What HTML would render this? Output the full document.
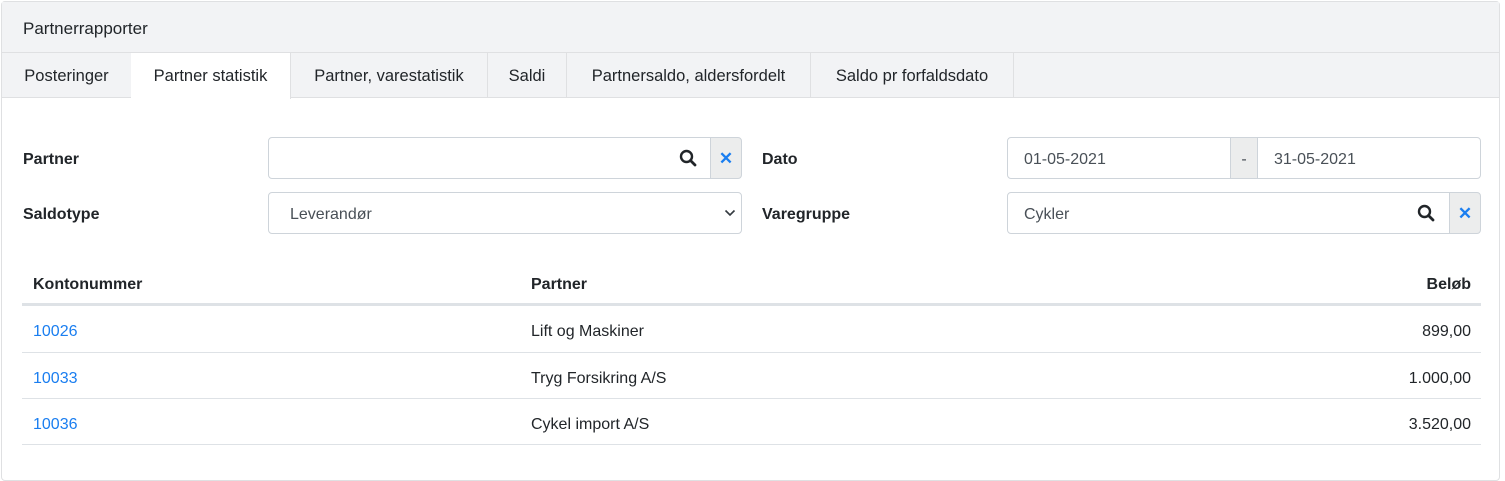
<!DOCTYPE html>
<html><head><meta charset="utf-8"><style>
*{box-sizing:border-box;margin:0;padding:0}
body{width:1505px;height:446px;overflow:hidden;background:#fff;font-family:"Liberation Sans",sans-serif;font-size:16px;color:#212529}
.card{position:absolute;left:1px;top:1px;width:1499px;height:480px;border:1px solid #dfe0e2;border-radius:4px}
.hdr{height:51px;background:#f2f3f5;border-bottom:1px solid #dfe0e2;padding:17px 0 0 21px;font-size:17px}
.tabs{position:absolute;top:51px;left:0;right:0;height:45px;background:#f2f3f5;border-bottom:1px solid #dfe0e2}
.tab{position:absolute;top:0;height:45px;padding-top:14px;text-align:center;border-right:1px solid #dfe0e2;font-size:16.5px}
.tab.act{background:#fff;height:46px}
.abs{position:absolute}
.lbl{font-weight:bold}
.inp{position:absolute;border:1px solid #ced4da;background:#fff;height:42px;padding:13px 0 0 21px;color:#495057}
.add{position:absolute;background:#eceded;border:1px solid #ced4da;height:42px;text-align:center;padding-top:11px}
.x{color:#1a7ef0;font-weight:bold;font-size:17px}
.th{font-weight:bold}
.line{position:absolute;left:22px;width:1459px;height:1px;background:#dee2e6}
a{color:#1a7ef0;text-decoration:none}
</style></head><body>
<div class="card">
<div class="hdr">Partnerrapporter</div>
<div class="tabs">
<div class="tab" style="left:0;width:130px">Posteringer</div>
<div class="tab act" style="left:129px;width:160px">Partner statistik</div>
<div class="tab" style="left:289px;width:197px">Partner, varestatistik</div>
<div class="tab" style="left:486px;width:79px">Saldi</div>
<div class="tab" style="left:565px;width:244px">Partnersaldo, aldersfordelt</div>
<div class="tab" style="left:809px;width:203px">Saldo pr forfaldsdato</div>
</div>
</div>
<div class="abs lbl" style="left:23px;top:151px">Partner</div>
<div class="inp" style="left:268px;top:137px;width:443px;border-radius:4px 0 0 4px"></div>
<svg class="abs" style="left:679px;top:149px" width="18" height="18" viewBox="0 0 18 18"><circle cx="7.5" cy="7.5" r="5.5" fill="none" stroke="#212529" stroke-width="2.4"/><path d="M11.5 11.5L16 16" stroke="#212529" stroke-width="2.8" stroke-linecap="round"/></svg>
<div class="add x" style="left:710px;top:137px;width:32px;border-radius:0 4px 4px 0">✕</div>
<div class="abs lbl" style="left:23px;top:206px">Saldotype</div>
<div class="inp" style="left:268px;top:192px;width:474px;border-radius:4px">Leverandør</div>
<svg class="abs" style="left:724px;top:209px" width="12" height="8" viewBox="0 0 12 8"><path d="M1.5 1.5L6 6L10.5 1.5" fill="none" stroke="#343a40" stroke-width="1.6"/></svg>
<div class="abs lbl" style="left:762px;top:151px">Dato</div>
<div class="inp" style="left:1007px;top:137px;width:224px;border-radius:4px 0 0 4px;padding-left:16px">01-05-2021</div>
<div class="add" style="left:1230px;top:137px;width:28px;color:#495057;padding-top:13px">-</div>
<div class="inp" style="left:1257px;top:137px;width:224px;border-radius:0 4px 4px 0;padding-left:16px">31-05-2021</div>
<div class="abs lbl" style="left:762px;top:206px">Varegruppe</div>
<div class="inp" style="left:1007px;top:192px;width:443px;border-radius:4px 0 0 4px;padding-left:16px">Cykler</div>
<svg class="abs" style="left:1417px;top:204px" width="18" height="18" viewBox="0 0 18 18"><circle cx="7.5" cy="7.5" r="5.5" fill="none" stroke="#212529" stroke-width="2.4"/><path d="M11.5 11.5L16 16" stroke="#212529" stroke-width="2.8" stroke-linecap="round"/></svg>
<div class="add x" style="left:1449px;top:192px;width:32px;border-radius:0 4px 4px 0">✕</div>
<div class="abs th" style="left:33px;top:276px">Kontonummer</div>
<div class="abs th" style="left:531px;top:276px">Partner</div>
<div class="abs th" style="right:34px;top:276px">Beløb</div>
<div class="line" style="top:303px;height:3px"></div>
<div class="abs" style="left:33px;top:323px"><a>10026</a></div>
<div class="abs" style="left:531px;top:323px">Lift og Maskiner</div>
<div class="abs" style="right:34px;top:323px">899,00</div>
<div class="line" style="top:352px"></div>
<div class="abs" style="left:33px;top:370px"><a>10033</a></div>
<div class="abs" style="left:531px;top:370px">Tryg Forsikring A/S</div>
<div class="abs" style="right:34px;top:370px">1.000,00</div>
<div class="line" style="top:398px"></div>
<div class="abs" style="left:33px;top:416px"><a>10036</a></div>
<div class="abs" style="left:531px;top:416px">Cykel import A/S</div>
<div class="abs" style="right:34px;top:416px">3.520,00</div>
<div class="line" style="top:444px"></div>
</body></html>
